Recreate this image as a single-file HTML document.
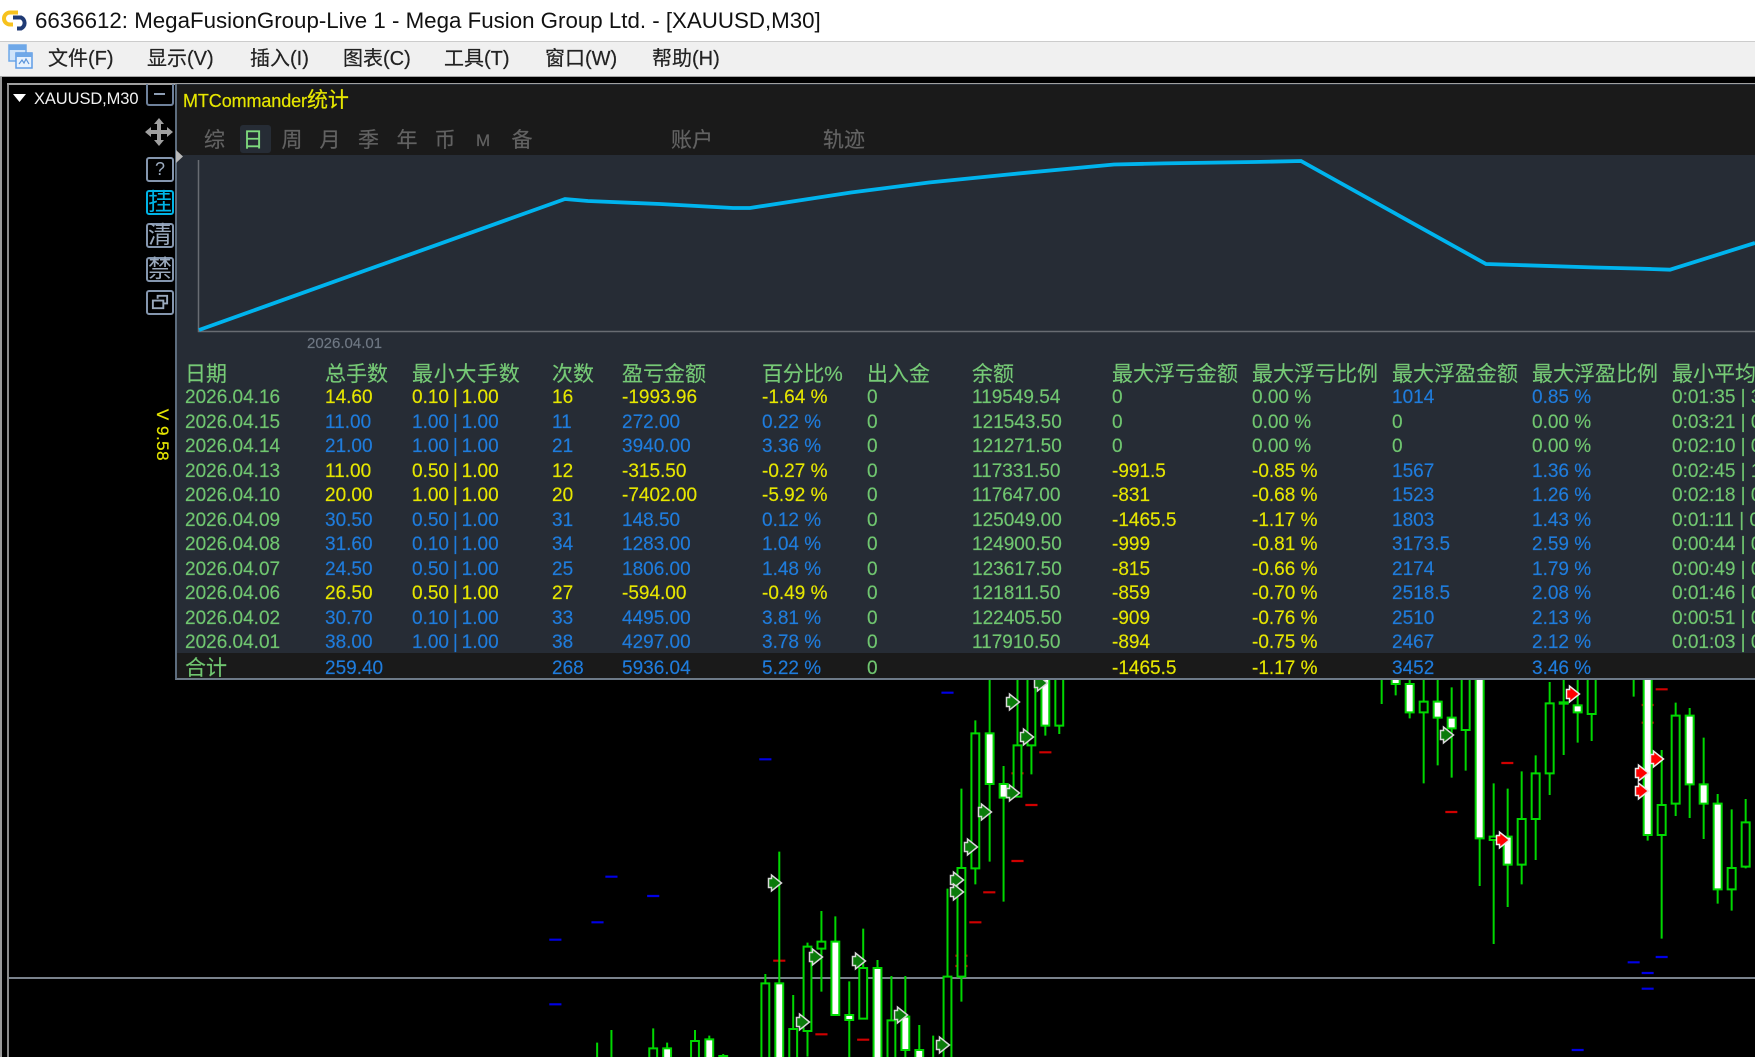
<!DOCTYPE html>
<html><head><meta charset="utf-8"><style>
html,body{margin:0;padding:0;background:#000;width:1755px;height:1057px;overflow:hidden}
#w{position:absolute;left:0;top:0;width:1755px;height:1057px;overflow:hidden;background:#000;filter:blur(.3px);font-family:"Liberation Sans","Noto Sans CJK SC",sans-serif}
.a{position:absolute;white-space:nowrap}
#t{position:absolute;left:0;top:0;width:1755px;height:41px;background:#fff}
#m{position:absolute;left:0;top:41px;width:1755px;height:36px;background:#f0f0f0;border-top:1px solid #ccc;box-sizing:border-box;border-bottom:1px solid #a8a8a8}
.mi{position:absolute;top:58.500px;line-height:0;font-size:20px;color:#222;white-space:nowrap;-webkit-text-stroke:.2px #222}
.btn{position:absolute;left:146px;width:24px;height:21px;border:2px solid #8496ae;border-radius:3px;color:#9aa9bd;font-size:24px;line-height:21px;text-align:center;box-sizing:content-box}
#p{position:absolute;left:175px;top:84px;width:1580px;height:596px;background:#262c35;border-left:2px solid #5d6d7e;border-bottom:2px solid #6d7a88;box-sizing:border-box}
#ph{position:absolute;left:177px;top:85px;width:1578px;height:70px;background:#1a1a1a}
.tb{position:absolute;top:141px;line-height:0;font-size:21px;color:#626262;-webkit-text-stroke:.2px #626262}
.r{position:absolute;left:0;width:1755px;height:24px;line-height:24px;font-size:19px;-webkit-text-stroke:.15px}
.r span{position:absolute;white-space:nowrap;top:0}
.r span:nth-child(1){left:185px}.r span:nth-child(2){left:325px}.r span:nth-child(3){left:412px;word-spacing:-1.4px}.r span:nth-child(4){left:552px}.r span:nth-child(5){left:622px}.r span:nth-child(6){left:762px}.r span:nth-child(7){left:867px}.r span:nth-child(8){left:972px}.r span:nth-child(9){left:1112px}.r span:nth-child(10){left:1252px}.r span:nth-child(11){left:1392px}.r span:nth-child(12){left:1532px}.r span:nth-child(13){left:1672px}
.g{color:#70c670}.y{color:#e6e600}.b{color:#1f7cdc}
.h{font-size:21px}.h span{color:#76ca76}
.c path,.c rect{vector-effect:non-scaling-stroke}
.c .wk{stroke:#00d800;stroke-width:2;fill:none}
.c .ho{fill:#000;stroke:#00d800;stroke-width:2}
.c .fi{fill:#fff;stroke:#00d800;stroke-width:2}
.c .bd{stroke:#0000e6;stroke-width:2.200;fill:none}
.c .rd{stroke:#d00000;stroke-width:2.200;fill:none}
.ag{fill:#0b7a0b;stroke:#d8d8d8;stroke-width:1.500}
.ar{fill:#f00;stroke:#ececec;stroke-width:1.500}
</style></head><body><div id="w">

<svg class="c a" style="left:0;top:0" width="1755" height="1057" viewBox="0 0 1755 1057">
<rect x="8" y="977" width="1747" height="2" fill="#7a828c"/>
<g transform="translate(520 680) scale(.35714 .33333)">
<path class="bd" d="M1180 38h34M670 238h34M239 590h34M356 648h34M200 727h34M82 779h34M82 973h34"/>
<path class="rd" d="M709 842h34M1376 280h34M1454 217h34M1415 375h34M1376 543h34M1297 637h34M1258 727h34M1219 827h34M1219 858h34M827 1063h34M944 1079h34"/>
<path class="wk" d="M216 1088V1140M256 1050V1140M373 1045V1140M412 1088V1140M490 1050V1140M530 1067V1140M569 1122V1140M687 882V1140M726 515V1140M765 945V1140M805 788V1130M844 693V935M883 709V1005M922 904V1140M961 746V1016M1001 840V1140M1040 888V1140M1079 888V1140M1118 1035V1140M1157 1067V1140M1197 626V1140M1236 326V965M1275 121V613M1315 -40V545M1354 258V665M1393 -40V350M1432 -40V283M1471 -40V167M1510 -40V162"/>
<rect class="ho" x="362" y="1105" width="22" height="40"/><rect class="ho" x="479" y="1083" width="22" height="60"/><rect class="ho" x="558" y="1128" width="22" height="10"/><rect class="ho" x="676" y="910" width="22" height="230"/><rect class="ho" x="754" y="1047" width="22" height="90"/><rect class="ho" x="794" y="800" width="22" height="253"/><rect class="ho" x="833" y="785" width="22" height="21"/><rect class="ho" x="950" y="864" width="22" height="152"/><rect class="ho" x="1029" y="1021" width="22" height="120"/><rect class="ho" x="1186" y="890" width="22" height="250"/><rect class="ho" x="1225" y="564" width="22" height="326"/><rect class="ho" x="1264" y="160" width="22" height="405"/><rect class="ho" x="1382" y="196" width="22" height="154"/><rect class="ho" x="1421" y="-40" width="22" height="236"/><rect class="ho" x="1499" y="-40" width="22" height="177"/>
<rect class="fi" x="401" y="1105" width="22" height="40"/><rect class="fi" x="519" y="1078" width="22" height="60"/><rect class="fi" x="715" y="910" width="22" height="230"/><rect class="fi" x="872" y="785" width="22" height="220"/><rect class="fi" x="911" y="1005" width="22" height="15"/><rect class="fi" x="990" y="864" width="22" height="280"/><rect class="fi" x="1068" y="1010" width="22" height="100"/><rect class="fi" x="1107" y="1110" width="22" height="40"/><rect class="fi" x="1304" y="160" width="22" height="152"/><rect class="fi" x="1343" y="312" width="22" height="41"/><rect class="fi" x="1460" y="-40" width="22" height="177"/>
</g>
<g transform="translate(1340 670) scale(.33333)">
<path class="bd" d="M863 877h36M947 861h36M905 909h36M905 956h36M695 1140h36"/>
<path class="rd" d="M947 58h36M905 105h36M905 158h36M484 279h36M316 426h36"/>
<path class="wk" d="M125 0V102M167 0V76M209 0V145M251 0V340M293 0V286M335 52V323M377 0V302M419 0V648M461 340V822M503 356V711M545 304V643M587 256V570M629 36V375M671 0V255M713 0V218M755 0V213M881 0V80M923 0V512M965 240V806M1007 98V438M1049 114V444M1091 203V507M1133 372V701M1175 418V722M1217 387V595"/>
<rect class="ho" x="239" y="95" width="24" height="32"/><rect class="ho" x="365" y="0" width="24" height="180"/><rect class="ho" x="449" y="500" width="24" height="10"/><rect class="ho" x="533" y="447" width="24" height="137"/><rect class="ho" x="575" y="310" width="24" height="137"/><rect class="ho" x="617" y="100" width="24" height="210"/><rect class="ho" x="743" y="0" width="24" height="132"/><rect class="ho" x="953" y="405" width="24" height="90"/><rect class="ho" x="995" y="137" width="24" height="264"/><rect class="ho" x="1163" y="594" width="24" height="64"/><rect class="ho" x="1205" y="457" width="24" height="133"/>
<rect class="fi" x="155" y="0" width="24" height="42"/><rect class="fi" x="197" y="42" width="24" height="85"/><rect class="fi" x="281" y="95" width="24" height="48"/><rect class="fi" x="323" y="143" width="24" height="32"/><rect class="fi" x="407" y="0" width="24" height="505"/><rect class="fi" x="491" y="500" width="24" height="84"/><rect class="fi" x="659" y="97" width="24" height="4"/><rect class="fi" x="701" y="106" width="24" height="21"/><rect class="fi" x="911" y="0" width="24" height="495"/><rect class="fi" x="1037" y="137" width="24" height="206"/><rect class="fi" x="1079" y="343" width="24" height="58"/><rect class="fi" x="1121" y="401" width="24" height="257"/>
</g>
<defs><path id="ar" d="M-6.500,-4.500H-3.500V-8L6.500,0L-3.500,8V4.500H-6.500Z"/></defs>
<g class="ag">
<use href="#ar" x="775" y="883"/><use href="#ar" x="1013" y="702"/><use href="#ar" x="1041" y="683"/><use href="#ar" x="1027" y="737"/><use href="#ar" x="1013" y="793"/><use href="#ar" x="985" y="812"/><use href="#ar" x="971" y="847"/><use href="#ar" x="957" y="880"/><use href="#ar" x="957" y="892"/><use href="#ar" x="816" y="957"/><use href="#ar" x="859" y="961"/><use href="#ar" x="803" y="1022"/><use href="#ar" x="901" y="1015"/><use href="#ar" x="943" y="1045"/><use href="#ar" x="1447" y="735"/>
</g>
<g class="ar">
<use href="#ar" x="1573" y="694"/><use href="#ar" x="1503" y="840"/><use href="#ar" x="1657" y="759"/><use href="#ar" x="1642" y="773"/><use href="#ar" x="1642" y="791"/>
</g>
</svg>

<div class="a" style="left:0;top:77px;width:2px;height:980px;background:#9a9a9a"></div>
<div class="a" style="left:7px;top:84px;width:1.500px;height:973px;background:#8a8a8a"></div>
<div class="a" style="left:7px;top:83px;width:1748px;height:2px;background:#a0a0a0"></div>

<div id="t"></div>
<svg class="a" style="left:0;top:8px" width="32" height="24" viewBox="0 0 32 24">
<path d="M18 4.500H10A6 6 0 0 0 10 16.500H13" fill="none" stroke="#f7c21e" stroke-width="4"/>
<path d="M13 9.500H21A6 6 0 0 1 21 20.500H17" fill="none" stroke="#1f3a74" stroke-width="4"/>
</svg>
<div class="a" style="left:35px;top:21px;line-height:0;font-size:22.3px;color:#111">6636612: MegaFusionGroup-Live 1 - Mega Fusion Group Ltd. - [XAUUSD,M30]</div>

<div id="m"></div>
<svg class="a" style="left:8px;top:44px" width="26" height="26" viewBox="0 0 26 26">
<rect x="1" y="1" width="17" height="16" fill="#cfe4fa" stroke="#6fa8e8" stroke-width="1.500"/>
<rect x="1" y="1" width="17" height="5" fill="#6fa8e8"/>
<rect x="8" y="9" width="16" height="15" fill="#e8f2fd" stroke="#5f9ce6" stroke-width="1.500"/>
<rect x="8" y="9" width="16" height="4" fill="#6fa8e8"/>
<path d="M11 20l3-4 2 3 2-4 3 5" fill="none" stroke="#5a94da" stroke-width="1.200"/>
</svg>
<div class="mi" style="left:48px">文件(F)</div>
<div class="mi" style="left:147px">显示(V)</div>
<div class="mi" style="left:250px">插入(I)</div>
<div class="mi" style="left:343px">图表(C)</div>
<div class="mi" style="left:444px">工具(T)</div>
<div class="mi" style="left:545px">窗口(W)</div>
<div class="mi" style="left:652px">帮助(H)</div>

<svg class="a" style="left:13px;top:94px" width="13" height="8"><path d="M0 0H13L6.500 8Z" fill="#fff"/></svg>
<div class="a" style="left:34px;top:99px;line-height:0;font-size:16.5px;color:#f2f2f2;letter-spacing:-.1px">XAUUSD,M30</div>

<div class="a" style="left:146px;top:84px;width:24px;height:20px;border:2px solid #6e819b;border-top:0;border-radius:0 0 3px 3px"></div>
<div class="a" style="left:154px;top:93px;width:11px;height:2px;background:#8d9db3"></div>
<svg class="a" style="left:144px;top:117px" width="30" height="30" viewBox="0 0 30 30"><path d="M15 1l5 6h-3v6h6v-3l6 5-6 5v-3h-6v6h3l-5 6-5-6h3v-6H7v3l-6-5 6-5v3h6V7h-3z" fill="#a0a0a0"/></svg>

<div class="btn" style="top:157px;font-size:18px">?</div>
<div class="btn" style="top:190px;color:#00b4e6;border-color:#00b4e6">挂</div>
<div class="btn" style="top:223px">清</div>
<div class="btn" style="top:257px">禁</div>
<div class="btn" style="top:290px"><svg width="22" height="19" viewBox="0 0 23 20" style="display:block;margin:1px"><path d="M9 6V3H19V11H15M4 8H15V16H4Z" fill="none" stroke="#9aa9bd" stroke-width="2"/></svg></div>

<div class="a" style="left:162px;top:435px;line-height:0;font-size:17px;color:#e6e600;transform:translate(-50%,0) rotate(90deg);letter-spacing:.5px;-webkit-text-stroke:.2px #e6e600">V 9.58</div>

<div id="p"></div>
<div id="ph"></div>
<div class="a" style="left:183px;top:101px;line-height:0;font-size:18px;color:#e6e600;letter-spacing:-.1px;-webkit-text-stroke:.2px #e6e600">MTCommander<span style="font-size:21px">统计</span></div>

<div class="a" style="left:240px;top:125px;width:31px;height:28px;background:#262c35;border-radius:3px"></div>
<div class="tb" style="left:204px">综</div>
<div class="tb" style="left:242.500px;color:#7fdc7f;-webkit-text-stroke:.2px #7fdc7f">日</div>
<div class="tb" style="left:281.500px">周</div>
<div class="tb" style="left:319.500px">月</div>
<div class="tb" style="left:358px">季</div>
<div class="tb" style="left:396.500px">年</div>
<div class="tb" style="left:434.500px">币</div>
<div class="tb" style="left:476px;font-size:17px">M</div>
<div class="tb" style="left:511.500px">备</div>
<div class="tb" style="left:671px">账户</div>
<div class="tb" style="left:823px">轨迹</div>
<svg class="a" style="left:176px;top:150px" width="8" height="13"><path d="M0 0L7 6.500L0 13Z" fill="#b9b9b9"/></svg>

<svg class="a" style="left:0;top:0" width="1755" height="360" viewBox="0 0 1755 360">
<path d="M198.500 160V331.500H1755" fill="none" stroke="#686c72" stroke-width="1.500"/>
<polyline points="199,330 565,199 588,201 660,204 733,208 750,208 851,192.500 929,182.500 1007,174.600 1114,164.500 1164,163.400 1254,162 1301,161 1486,264 1517,265 1595,267.500 1640,268.600 1670,269.700 1755,243" fill="none" stroke="#00b4ee" stroke-width="3.800"/>
</svg>
<div class="a" style="left:307px;top:344px;line-height:0;font-size:15px;color:#6f7884;-webkit-text-stroke:.15px #6f7884">2026.04.01</div>

<div class="a" style="left:177px;top:653px;width:1578px;height:25px;background:#1a1a1a"></div>

<div class="r h" style="top:363px"><span>日期</span><span>总手数</span><span style="letter-spacing:.7px">最小大手数</span><span>次数</span><span>盈亏金额</span><span style="letter-spacing:-.3px">百分比%</span><span>出入金</span><span>余额</span><span>最大浮亏金额</span><span>最大浮亏比例</span><span>最大浮盈金额</span><span>最大浮盈比例</span><span>最小平均</span></div>
<div class="r" style="top:386px"><span class="g">2026.04.16</span><span class="y">14.60</span><span class="y">0.10 | 1.00</span><span class="y">16</span><span class="y">-1993.96</span><span class="y">-1.64 %</span><span class="g">0</span><span class="g">119549.54</span><span class="g">0</span><span class="g">0.00 %</span><span class="b">1014</span><span class="b">0.85 %</span><span class="g">0:01:35 | 3</span></div>
<div class="r" style="top:410.500px"><span class="g">2026.04.15</span><span class="b">11.00</span><span class="b">1.00 | 1.00</span><span class="b">11</span><span class="b">272.00</span><span class="b">0.22 %</span><span class="g">0</span><span class="g">121543.50</span><span class="g">0</span><span class="g">0.00 %</span><span class="g">0</span><span class="g">0.00 %</span><span class="g">0:03:21 | 0</span></div>
<div class="r" style="top:435px"><span class="g">2026.04.14</span><span class="b">21.00</span><span class="b">1.00 | 1.00</span><span class="b">21</span><span class="b">3940.00</span><span class="b">3.36 %</span><span class="g">0</span><span class="g">121271.50</span><span class="g">0</span><span class="g">0.00 %</span><span class="g">0</span><span class="g">0.00 %</span><span class="g">0:02:10 | 0</span></div>
<div class="r" style="top:459.500px"><span class="g">2026.04.13</span><span class="y">11.00</span><span class="y">0.50 | 1.00</span><span class="y">12</span><span class="y">-315.50</span><span class="y">-0.27 %</span><span class="g">0</span><span class="g">117331.50</span><span class="y">-991.5</span><span class="y">-0.85 %</span><span class="b">1567</span><span class="b">1.36 %</span><span class="g">0:02:45 | 1</span></div>
<div class="r" style="top:484px"><span class="g">2026.04.10</span><span class="y">20.00</span><span class="y">1.00 | 1.00</span><span class="y">20</span><span class="y">-7402.00</span><span class="y">-5.92 %</span><span class="g">0</span><span class="g">117647.00</span><span class="y">-831</span><span class="y">-0.68 %</span><span class="b">1523</span><span class="b">1.26 %</span><span class="g">0:02:18 | 0</span></div>
<div class="r" style="top:508.500px"><span class="g">2026.04.09</span><span class="b">30.50</span><span class="b">0.50 | 1.00</span><span class="b">31</span><span class="b">148.50</span><span class="b">0.12 %</span><span class="g">0</span><span class="g">125049.00</span><span class="y">-1465.5</span><span class="y">-1.17 %</span><span class="b">1803</span><span class="b">1.43 %</span><span class="g">0:01:11 | 0</span></div>
<div class="r" style="top:533px"><span class="g">2026.04.08</span><span class="b">31.60</span><span class="b">0.10 | 1.00</span><span class="b">34</span><span class="b">1283.00</span><span class="b">1.04 %</span><span class="g">0</span><span class="g">124900.50</span><span class="y">-999</span><span class="y">-0.81 %</span><span class="b">3173.5</span><span class="b">2.59 %</span><span class="g">0:00:44 | 0</span></div>
<div class="r" style="top:557.500px"><span class="g">2026.04.07</span><span class="b">24.50</span><span class="b">0.50 | 1.00</span><span class="b">25</span><span class="b">1806.00</span><span class="b">1.48 %</span><span class="g">0</span><span class="g">123617.50</span><span class="y">-815</span><span class="y">-0.66 %</span><span class="b">2174</span><span class="b">1.79 %</span><span class="g">0:00:49 | 0</span></div>
<div class="r" style="top:582px"><span class="g">2026.04.06</span><span class="y">26.50</span><span class="y">0.50 | 1.00</span><span class="y">27</span><span class="y">-594.00</span><span class="y">-0.49 %</span><span class="g">0</span><span class="g">121811.50</span><span class="y">-859</span><span class="y">-0.70 %</span><span class="b">2518.5</span><span class="b">2.08 %</span><span class="g">0:01:46 | 0</span></div>
<div class="r" style="top:606.500px"><span class="g">2026.04.02</span><span class="b">30.70</span><span class="b">0.10 | 1.00</span><span class="b">33</span><span class="b">4495.00</span><span class="b">3.81 %</span><span class="g">0</span><span class="g">122405.50</span><span class="y">-909</span><span class="y">-0.76 %</span><span class="b">2510</span><span class="b">2.13 %</span><span class="g">0:00:51 | 0</span></div>
<div class="r" style="top:631px"><span class="g">2026.04.01</span><span class="b">38.00</span><span class="b">1.00 | 1.00</span><span class="b">38</span><span class="b">4297.00</span><span class="b">3.78 %</span><span class="g">0</span><span class="g">117910.50</span><span class="y">-894</span><span class="y">-0.75 %</span><span class="b">2467</span><span class="b">2.12 %</span><span class="g">0:01:03 | 0</span></div>
<div class="r" style="top:657px"><span class="g" style="font-size:21px">合计</span><span class="b">259.40</span><span></span><span class="b">268</span><span class="b">5936.04</span><span class="b">5.22 %</span><span class="g">0</span><span></span><span class="y">-1465.5</span><span class="y">-1.17 %</span><span class="b">3452</span><span class="b">3.46 %</span><span></span></div>

</div></body></html>
